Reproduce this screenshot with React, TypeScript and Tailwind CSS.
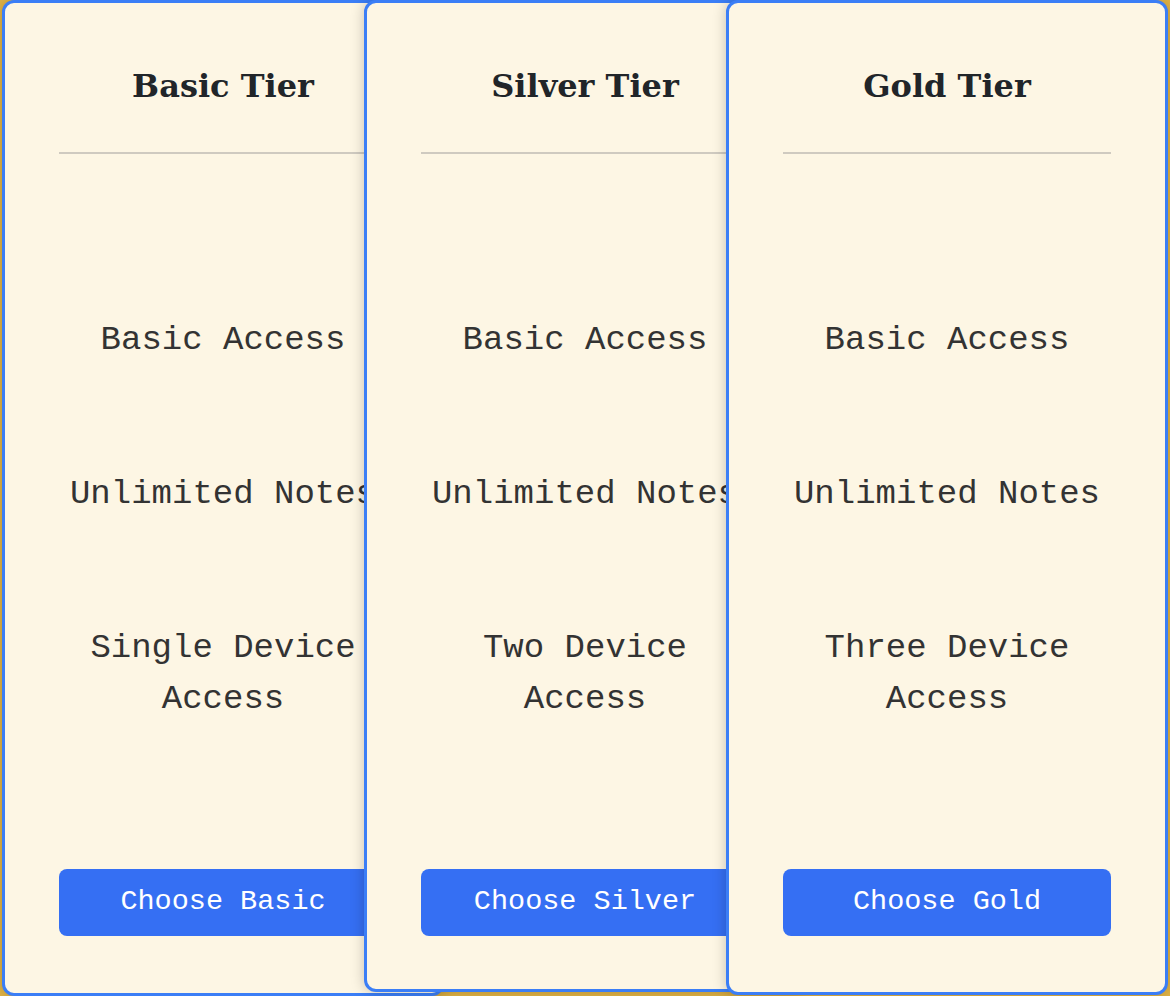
const TIERS = [
  { name: "Basic Tier", devices: "Single Device Access", cta: "Choose Basic", h: "h-[996px] ml-[2px]" },
  { name: "Silver Tier", devices: "Two Device Access", cta: "Choose Silver", h: "h-[992px] -ml-[80px]" },
  { name: "Gold Tier", devices: "Three Device Access", cta: "Choose Gold", h: "h-[995px] -ml-[80px]" },
];

function TierCard({ tier }: { tier: (typeof TIERS)[number] }) {
  return (
    <div
      className={`flex w-[442px] shrink-0 flex-col rounded-[12px] border-[3px] border-[#3b7ef6] bg-[#fdf6e4] px-[54px] pt-[59px] shadow-[0_0_14px_rgba(0,0,0,0.22)] ${tier.h}`}
    >
      <h2 className="border-b-2 border-[#cfcac0] pb-[42px] text-center font-['DejaVu_Serif',serif] text-[32px] font-bold leading-[48px] text-[#212529]">
        {tier.name}
      </h2>
      <ul className="mt-[161px] flex flex-col gap-[103px] text-center font-['Liberation_Mono',monospace] text-[34px] leading-[51px] text-[#333333]">
        <li className="whitespace-nowrap">Basic Access</li>
        <li className="whitespace-nowrap">Unlimited Notes</li>
        <li>{tier.devices}</li>
      </ul>
      <button className="mt-[144px] h-[67px] w-full rounded-[8px] bg-[#356ff3] font-['Liberation_Mono',monospace] text-[28.5px] text-white">
        {tier.cta}
      </button>
    </div>
  );
}

export default function App() {
  return (
    <div className="flex h-[996px] w-[1170px] items-start overflow-hidden bg-[#e2b446]">
      {TIERS.map((t) => (
        <TierCard key={t.name} tier={t} />
      ))}
    </div>
  );
}
